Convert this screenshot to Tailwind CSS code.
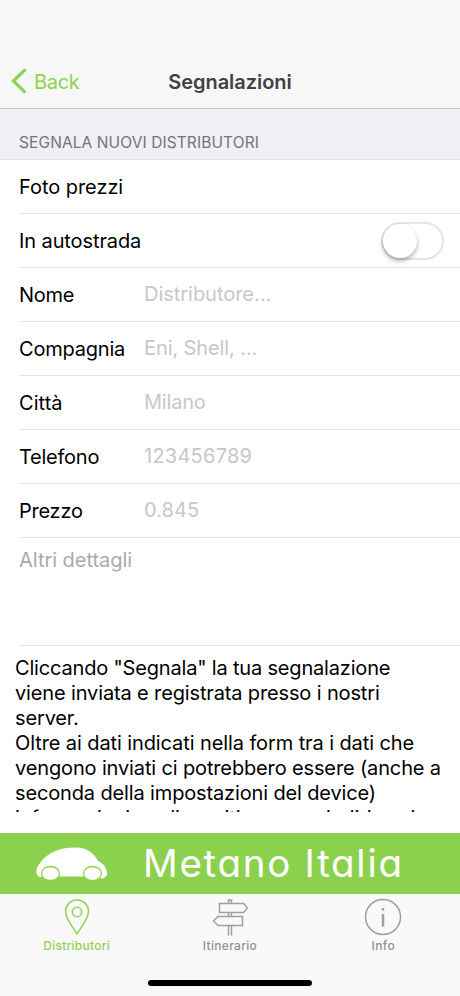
<!DOCTYPE html>
<html lang="it">
<head>
<meta charset="utf-8">
<meta name="viewport" content="width=device-width, initial-scale=1">
<title>Segnalazioni</title>
<script src="https://cdn.jsdelivr.net/npm/@tailwindcss/browser@4"></script>
</head>
<body class="bg-white">
<div class="flex h-[996px] w-[460px] flex-col overflow-hidden bg-white font-[Inter,sans-serif] text-[20px] text-black">
  <header class="grid h-[109px] shrink-0 grid-cols-[1fr_auto_1fr] items-end border-b border-[#c8c8cb] bg-[#f7f7f7] pb-[11px]">
    <a class="flex h-8 items-center pl-[11px] text-[#8cd350]">
      <svg class="h-[26px] w-[16px]" viewBox="0 0 16 26" fill="none" stroke="currentColor" stroke-width="3.2"><path d="M14.4 1.4 2.4 13l12 11.6"/></svg>
      <span class="ml-[7px] pt-px tracking-[-0.3px]">Back</span>
    </a>
    <h1 class="flex h-8 items-center pt-px font-semibold tracking-[-0.05px] text-[#414145]">Segnalazioni</h1>
    <span></span>
  </header>
  <h2 class="flex h-[51px] shrink-0 items-end border-b border-[#e2e2e6] bg-[#efeff4] pb-[5px] pl-[19px] text-[15.5px] leading-[22px] tracking-[0.1px] text-[#747478]">SEGNALA NUOVI DISTRIBUTORI</h2>
  <main class="flex h-[673px] shrink-0 flex-col">
    <div class="flex flex-col pl-[19px]">
      <div class="flex h-[54px] items-center border-b border-[#e4e4e6]"><span class="tracking-[-0.05px]">Foto prezzi</span></div>
      <div class="flex h-[54px] items-center justify-between border-b border-[#e4e4e6] pr-[16px]">
        <span class="tracking-[-0.1px]">In autostrada</span>
        <span class="flex h-[38px] w-[63px] items-center rounded-full border-2 border-[#e5e5e5] bg-white"><span class="size-[34px] rounded-full bg-white shadow-[0_3px_5px_rgba(0,0,0,0.3)]"></span></span>
      </div>
      <label class="flex h-[54px] items-center border-b border-[#e4e4e6]"><span class="w-[125px] tracking-[-0.3px]">Nome</span><span class="pb-[2px] tracking-[-0.03px] text-[#c7c7cc]">Distributore...</span></label>
      <label class="flex h-[54px] items-center border-b border-[#e4e4e6]"><span class="w-[125px] tracking-[-0.2px]">Compagnia</span><span class="pb-[2px] tracking-[-0.1px] text-[#c7c7cc]">Eni, Shell, ...</span></label>
      <label class="flex h-[54px] items-center border-b border-[#e4e4e6]"><span class="w-[125px] tracking-[0.05px]">Città</span><span class="pb-[2px] tracking-[-0.2px] text-[#c7c7cc]">Milano</span></label>
      <label class="flex h-[54px] items-center border-b border-[#e4e4e6]"><span class="w-[125px] tracking-[-0.25px]">Telefono</span><span class="pb-[2px] tracking-[0.25px] text-[#c7c7cc]">123456789</span></label>
      <label class="flex h-[54px] items-center border-b border-[#e4e4e6]"><span class="w-[125px] tracking-[-0.25px]">Prezzo</span><span class="pb-[2px] tracking-[0.1px] text-[#c7c7cc]">0.845</span></label>
      <div class="h-[108px] border-b border-[#e4e4e6] pt-[9px] leading-[26px] tracking-[-0.03px] text-[#aaaaaa]">Altri dettagli</div>
    </div>
    <div class="h-[166px] overflow-hidden whitespace-nowrap pl-[15px] pt-[10px] leading-[25px] tracking-[-0.14px]">
      <p class="tracking-[-0.18px]">Cliccando "Segnala" la tua segnalazione</p>
      <p>viene inviata e registrata presso i nostri</p>
      <p>server.</p>
      <p class="tracking-[-0.1px]">Oltre ai dati indicati nella form tra i dati che</p>
      <p>vengono inviati ci potrebbero essere (anche a</p>
      <p>seconda della impostazioni del device)</p>
      <p>informazioni su dispositivo come indirizzo ip</p>
    </div>
  </main>
  <div class="flex h-[61px] shrink-0 items-center bg-[#8cd14e] pl-[36px] text-white">
    <svg class="h-[34px] w-[72px]" viewBox="0 0 72 34">
      <path fill="currentColor" d="M.5 24C.8 19 3.500 17 6 13.500 13 5 25 .5 39 .5c13 0 19 6 23 13.500 4.500 2 7.500 5 8.500 9.500l.8 4.500-4 3.500L50 29.500H22L3.500 30C1.500 29 .2 27 .5 24Z"/>
      <g fill="currentColor" stroke="#8cd14e" stroke-width="1.300"><ellipse cx="14.500" cy="26.500" rx="9" ry="7"/><ellipse cx="56.500" cy="26.500" rx="9" ry="7"/></g>
    </svg>
    <span class="ml-[35px] whitespace-nowrap text-[38.5px] leading-[61px] font-normal tracking-[1.7px] [font-feature-settings:'cv11']">Metano Italia</span>
  </div>
  <nav class="flex h-[102px] shrink-0 flex-col justify-between bg-[#f9f9f9] pb-[10px]">
    <div class="grid grid-cols-3 text-[12px] leading-[16px] tracking-[0.4px] text-[#929292]">
      <a class="flex flex-col items-center font-medium text-[#8cd350]">
        <svg class="mt-[4px] h-[38px] w-[38px]" viewBox="0 0 38 38" fill="none" stroke="currentColor" stroke-width="1.500"><path d="M19 36C16 30.500 7.500 21 7.500 13.500a11.500 11.500 0 0 1 23 0C30.500 21 22 30.500 19 36Z"/><circle cx="19" cy="14" r="4.700"/></svg>
        <span class="mt-[2px] tracking-[0.25px]">Distributori</span>
      </a>
      <a class="flex flex-col items-center font-medium">
        <svg class="mt-[4px] h-[38px] w-[38px]" viewBox="0 0 38 38" fill="none" stroke="#a0a0a0" stroke-width="1.500"><path d="M8.500 5.500h24l4 4.500-4 4.500h-24ZM31.500 18.500H7L2.500 23 7 27.500h24.500ZM17.500 5.500V2h3v3.500M17.500 14.500v4m3-4v4M17.500 27.500v10m3-10v10"/></svg>
        <span class="mt-[2px] tracking-[0.3px]">Itinerario</span>
      </a>
      <a class="flex flex-col items-center font-medium">
        <svg class="mt-[4px] h-[38px] w-[38px]" viewBox="0 0 38 38" fill="none" stroke="#a0a0a0"><circle cx="19" cy="19" r="17.500" stroke-width="1.500"/><path stroke-width="2.500" d="M19 10v2.500M19 16v12.500"/></svg>
        <span class="mt-[2px]">Info</span>
      </a>
    </div>
    <div class="mx-auto h-[6px] w-[164px] rounded-full bg-black"></div>
  </nav>
</div>
</body>
</html>
